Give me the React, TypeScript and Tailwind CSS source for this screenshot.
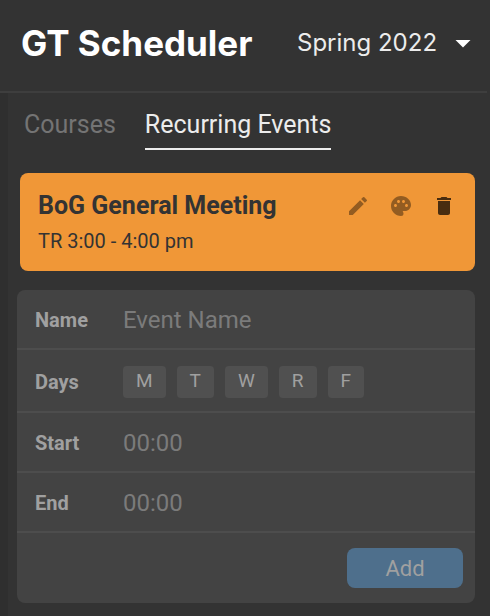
import { useState } from 'react';
import { MdArrowDropDown, MdDelete, MdEdit, MdPalette } from 'react-icons/md';

const days = ['M', 'T', 'W', 'R', 'F'];
const rowClass = 'flex items-center border-b-2 border-[#4d4d4d] px-[18px] pt-0.5';
const labelClass = 'w-[88px] shrink-0 text-xl font-bold text-[#a0a0a0]';
const inputClass =
  'min-w-0 flex-1 bg-transparent text-2xl text-[#a0a0a0] outline-none placeholder:text-[#7b7b7b]';

function Header() {
  return (
    <header className="mr-[3px] flex h-[93px] items-center justify-between border-b-2 border-[#3e3e3e] pr-1.5 pl-[21px] pb-[5px]">
      <h1 className="font-['Inter',sans-serif] text-[35px] leading-10 font-bold whitespace-nowrap text-white">
        GT Scheduler
      </h1>
      <div className="relative">
        <select
          aria-label="Term"
          className="appearance-none bg-transparent pr-[43px] font-['Inter',sans-serif] text-2xl text-[#ececec] outline-none"
        >
          <option>Spring 2022</option>
        </select>
        <MdArrowDropDown className="pointer-events-none absolute top-1/2 right-0 size-9 -translate-y-1/2 text-white" />
      </div>
    </header>
  );
}

function Tabs() {
  return (
    <nav className="flex gap-[29px] pl-4 text-[25px] leading-8">
      <button type="button" className="border-b-2 border-transparent pb-[7px] text-[#747474]">
        Courses
      </button>
      <button type="button" className="border-b-2 border-[#ececec] pb-[7px] text-[#ececec]">
        Recurring Events
      </button>
    </nav>
  );
}

function EventCard() {
  return (
    <article className="mt-[23px] ml-3 h-[98px] rounded-lg bg-[#f09737] px-[18px] pt-[17px] text-[#333333]">
      <div className="flex items-center justify-between">
        <h2 className="text-[25px] leading-8 font-bold">BoG General Meeting</h2>
        <div className="flex gap-[19px] pr-px text-[#935c21]">
          <button type="button" aria-label="Edit">
            <MdEdit className="size-6" />
          </button>
          <button type="button" aria-label="Colour">
            <MdPalette className="size-6" />
          </button>
          <button type="button" aria-label="Delete" className="text-[#492d10]">
            <MdDelete className="size-6" />
          </button>
        </div>
      </div>
      <p className="mt-[5px] text-xl leading-7">TR 3:00 - 4:00 pm</p>
    </article>
  );
}

function EventForm() {
  const [selected, setSelected] = useState<string[]>([]);
  const toggle = (day: string) =>
    setSelected(selected.includes(day) ? selected.filter((d) => d !== day) : [...selected, day]);

  return (
    <form className="mt-[19px] ml-[9px] rounded-lg bg-[#434343]" onSubmit={(e) => e.preventDefault()}>
      <div className={`${rowClass} h-[60px]`}>
        <label htmlFor="name" className={labelClass}>
          Name
        </label>
        <input id="name" placeholder="Event Name" className={inputClass} />
      </div>
      <div role="group" aria-labelledby="days" className={`${rowClass} h-[63px]`}>
        <span id="days" className={labelClass}>
          Days
        </span>
        <div className="flex gap-[11px]">
          {days.map((day) => (
            <button
              key={day}
              type="button"
              aria-pressed={selected.includes(day)}
              onClick={() => toggle(day)}
              className="h-8 rounded bg-[#505050] px-[13px] text-[19px] text-[#a0a0a0] aria-pressed:bg-[#4e6f8c]"
            >
              {day}
            </button>
          ))}
        </div>
      </div>
      <div className={`${rowClass} h-[60px]`}>
        <label htmlFor="start" className={labelClass}>
          Start
        </label>
        <input id="start" placeholder="00:00" className={inputClass} />
      </div>
      <div className={`${rowClass} h-[60px]`}>
        <label htmlFor="end" className={labelClass}>
          End
        </label>
        <input id="end" placeholder="00:00" className={inputClass} />
      </div>
      <div className="flex justify-end px-3 py-[15px]">
        <button type="submit" className="h-10 w-[116px] rounded-lg bg-[#4e6f8c] text-[22px] text-[#a0a0a0]">
          Add
        </button>
      </div>
    </form>
  );
}

export default function App() {
  return (
    <div className="flex min-h-screen flex-col bg-[#333333] font-['Roboto',sans-serif]">
      <Header />
      <main className="flex-1 border-l-8 border-[#2f2f2f] pt-4 pr-[15px] pb-3">
        <Tabs />
        <EventCard />
        <EventForm />
      </main>
    </div>
  );
}
